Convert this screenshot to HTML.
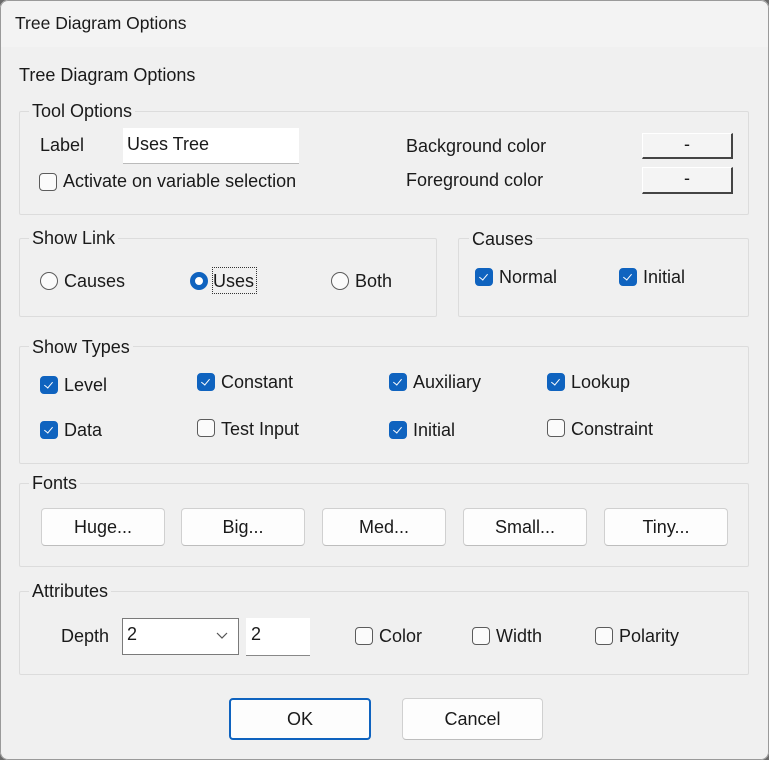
<!DOCTYPE html>
<html><head><meta charset="utf-8"><style>
*{margin:0;padding:0;box-sizing:border-box}
body{width:769px;height:760px;background:#6a6a6a;position:relative;overflow:hidden;font-family:"Liberation Sans",sans-serif;font-size:18px;color:#1a1a1a}
.win{position:absolute;left:0;top:0;width:769px;height:760px;background:#f0f0f0;border-radius:8px;overflow:hidden}
.frame{position:absolute;left:0;top:0;width:769px;height:760px;border:1px solid #9a9a9a;border-radius:8px;pointer-events:none}
.tb{position:absolute;left:0;top:0;width:100%;height:47px;background:#f3f3f3}
.t{position:absolute;line-height:20px;white-space:nowrap}
.g{position:absolute;border:1px solid #dcdcdc;border-radius:2px}
.lg{position:absolute;background:#f0f0f0;padding:0 3px;line-height:20px}
.cb{position:absolute;width:18px;height:18px;border:1px solid #5c5c5c;border-radius:4px;background:#fbfbfb}
.cb.on{background:#0f63bf;border-color:#0f63bf}
.cb.on::after{content:"";position:absolute;left:5px;top:3px;width:4px;height:7px;border:solid #fff;border-width:0 1.5px 1.5px 0;transform:rotate(40deg)}
.rd{position:absolute;width:18px;height:18px;border:1px solid #5c5c5c;border-radius:50%;background:#fbfbfb}
.rd.on{background:#fff;border:5px solid #0f63bf}
.btn{position:absolute;background:#fdfdfd;border:1px solid #d0d0d0;border-bottom-color:#bdbdbd;border-radius:4px;text-align:center}
.cbtn{position:absolute;background:#f4f4f4;border:1px solid #fff;border-right:2px solid #444;border-bottom:2px solid #444;text-align:center;line-height:20px}
.in{position:absolute;background:#fff}
</style></head><body>
<div class="win">
<div class="tb"></div>
<div class="t" style="left:15px;top:13px;font-size:17.5px">Tree Diagram Options</div>
<div class="t" style="left:19px;top:65px">Tree Diagram Options</div>

<div class="g" style="left:19px;top:111px;width:730px;height:104px"></div>
<div class="lg" style="left:29px;top:101px">Tool Options</div>
<div class="t" style="left:40px;top:135px">Label</div>
<div class="in" style="left:123px;top:128px;width:176px;height:36px;border-bottom:1px solid #bbb"></div>
<div class="t" style="left:127px;top:134px">Uses Tree</div>
<div class="cb" style="left:39px;top:173px"></div>
<div class="t" style="left:63px;top:171px">Activate on variable selection</div>
<div class="t" style="left:406px;top:136px">Background color</div>
<div class="t" style="left:406px;top:170px">Foreground color</div>
<div class="cbtn" style="left:642px;top:133px;width:91px;height:26px">-</div>
<div class="cbtn" style="left:642px;top:167px;width:91px;height:27px">-</div>

<div class="g" style="left:19px;top:238px;width:418px;height:79px"></div>
<div class="lg" style="left:29px;top:228px">Show Link</div>
<div class="rd" style="left:40px;top:272px"></div>
<div class="t" style="left:64px;top:271px">Causes</div>
<div class="rd on" style="left:190px;top:272px"></div>
<div style="position:absolute;left:212px;top:267px;width:45px;height:27px;border:1px dotted #333"></div>
<div class="t" style="left:213px;top:271px">Uses</div>
<div class="rd" style="left:331px;top:272px"></div>
<div class="t" style="left:355px;top:271px">Both</div>

<div class="g" style="left:458px;top:238px;width:291px;height:79px"></div>
<div class="lg" style="left:469px;top:229px">Causes</div>
<div class="cb on" style="left:475px;top:268px"></div>
<div class="t" style="left:499px;top:267px">Normal</div>
<div class="cb on" style="left:619px;top:268px"></div>
<div class="t" style="left:643px;top:267px">Initial</div>

<div class="g" style="left:19px;top:346px;width:730px;height:118px"></div>
<div class="lg" style="left:29px;top:337px">Show Types</div>
<div class="cb on" style="left:40px;top:376px"></div><div class="t" style="left:64px;top:375px">Level</div>
<div class="cb on" style="left:197px;top:373px"></div><div class="t" style="left:221px;top:372px">Constant</div>
<div class="cb on" style="left:389px;top:373px"></div><div class="t" style="left:413px;top:372px">Auxiliary</div>
<div class="cb on" style="left:547px;top:373px"></div><div class="t" style="left:571px;top:372px">Lookup</div>
<div class="cb on" style="left:40px;top:421px"></div><div class="t" style="left:64px;top:420px">Data</div>
<div class="cb" style="left:197px;top:419px"></div><div class="t" style="left:221px;top:419px">Test Input</div>
<div class="cb on" style="left:389px;top:421px"></div><div class="t" style="left:413px;top:420px">Initial</div>
<div class="cb" style="left:547px;top:419px"></div><div class="t" style="left:571px;top:419px">Constraint</div>

<div class="g" style="left:19px;top:483px;width:730px;height:84px"></div>
<div class="lg" style="left:29px;top:473px">Fonts</div>
<div class="btn" style="left:41px;top:508px;width:124px;height:38px;line-height:36px">Huge...</div>
<div class="btn" style="left:181px;top:508px;width:124px;height:38px;line-height:36px">Big...</div>
<div class="btn" style="left:322px;top:508px;width:124px;height:38px;line-height:36px">Med...</div>
<div class="btn" style="left:463px;top:508px;width:124px;height:38px;line-height:36px">Small...</div>
<div class="btn" style="left:604px;top:508px;width:124px;height:38px;line-height:36px">Tiny...</div>

<div class="g" style="left:19px;top:591px;width:730px;height:84px"></div>
<div class="lg" style="left:29px;top:581px">Attributes</div>
<div class="t" style="left:61px;top:626px">Depth</div>
<div class="in" style="left:122px;top:618px;width:117px;height:37px;border:1px solid #7a7a7a"></div>
<div class="t" style="left:127px;top:624px">2</div>
<svg style="position:absolute;left:216px;top:632px" width="12" height="8"><path d="M1 1L6 6L11 1" fill="none" stroke="#555" stroke-width="1.2"/></svg>
<div class="in" style="left:246px;top:618px;width:64px;height:38px;border-bottom:1px solid #888"></div>
<div class="t" style="left:251px;top:624px">2</div>
<div class="cb" style="left:355px;top:627px"></div><div class="t" style="left:379px;top:626px">Color</div>
<div class="cb" style="left:472px;top:627px"></div><div class="t" style="left:496px;top:626px">Width</div>
<div class="cb" style="left:595px;top:627px"></div><div class="t" style="left:619px;top:626px">Polarity</div>

<div class="btn" style="left:229px;top:698px;width:142px;height:42px;line-height:38px;border:2px solid #0f63bf">OK</div>
<div class="btn" style="left:402px;top:698px;width:141px;height:42px;line-height:40px">Cancel</div>
<div class="frame"></div>
</div>
</body></html>
